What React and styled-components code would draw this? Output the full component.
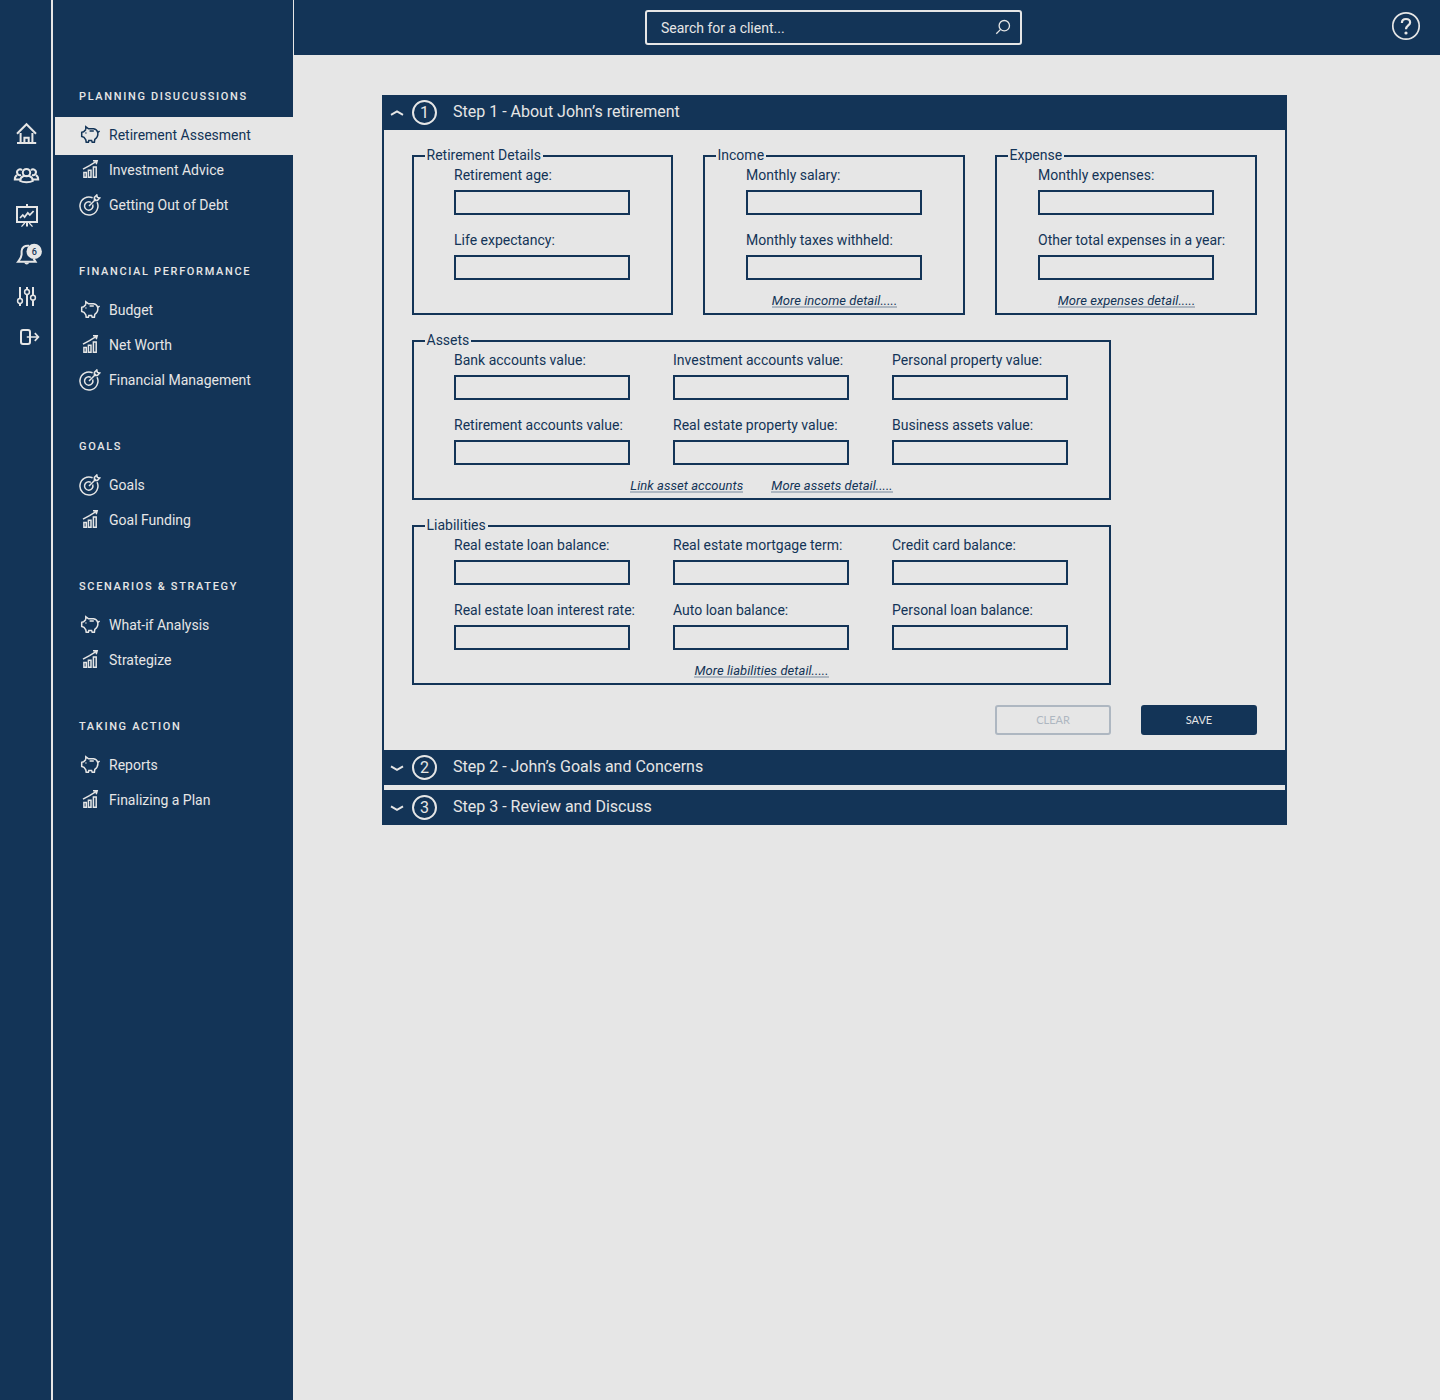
import React from 'react'
import styled, { createGlobalStyle } from 'styled-components'

const navy = '#133457'
const light = '#e6e6e6'

const menu = [
  { title: 'PLANNING DISUCUSSIONS',
    items: [
      { icon: 'pig', label: 'Retirement Assesment', active: true },
      { icon: 'chart', label: 'Investment Advice' },
      { icon: 'target', label: 'Getting Out of Debt' },
    ] },
  { title: 'FINANCIAL PERFORMANCE',
    items: [
      { icon: 'pig', label: 'Budget' },
      { icon: 'chart', label: 'Net Worth' },
      { icon: 'target', label: 'Financial Management' },
    ] },
  { title: 'GOALS',
    items: [
      { icon: 'target', label: 'Goals' },
      { icon: 'chart', label: 'Goal Funding' },
    ] },
  { title: 'SCENARIOS & STRATEGY',
    items: [
      { icon: 'pig', label: 'What-if Analysis' },
      { icon: 'chart', label: 'Strategize' },
    ] },
  { title: 'TAKING ACTION',
    items: [
      { icon: 'pig', label: 'Reports' },
      { icon: 'chart', label: 'Finalizing a Plan' },
    ] },
]

const topGroups = [
  { title: 'Retirement Details', fields: ['Retirement age:', 'Life expectancy:'], links: [] },
  { title: 'Income', fields: ['Monthly salary:', 'Monthly taxes withheld:'], links: ['More income detail.....'] },
  { title: 'Expense', fields: ['Monthly expenses:', 'Other total expenses in a year:'], links: ['More expenses detail.....'] },
]

const wideGroups = [
  { title: 'Assets',
    fields: [
      'Bank accounts value:', 'Investment accounts value:', 'Personal property value:',
      'Retirement accounts value:', 'Real estate property value:', 'Business assets value:',
    ],
    links: ['Link asset accounts', 'More assets detail.....'] },
  { title: 'Liabilities',
    fields: [
      'Real estate loan balance:', 'Real estate mortgage term:', 'Credit card balance:',
      'Real estate loan interest rate:', 'Auto loan balance:', 'Personal loan balance:',
    ],
    links: ['More liabilities detail.....'] },
]

const menuIcons = {
  pig: (
    <>
      <path d="M6.8 5.6 V2.8 L9.6 4.8 H14.6 C17 5.2 18.4 6.8 18.8 8.6 L20.6 7 M18.8 8.6 C19.2 11.6 18 13.8 15.8 15.4 L15.4 18.2 H13.2 L12.6 16.6 H9.8 L9.4 18.2 H7.2 L6.8 15.8 L5 13.4 L2.7 12.4 V8.4 L4.6 7.8 L6.8 5.6" />
      <path d="M10.6 7 H14.8 M6.9 8.6 V9.4" />
    </>
  ),
  chart: (
    <>
      <path d="M4.9 13.6 H7.3 V18.3 H4.9 Z M9.4 11.2 H12 V18.3 H9.4 Z M14.4 8 H17.2 V18.3 H14.4 Z" />
      <path d="M4 10.2 L10.5 6.6 L17.4 2.4 M14 1.8 L18.2 1.8 L17.2 5.2" />
    </>
  ),
  target: (
    <>
      <path d="M13.6 3.8 A9 9 0 1 0 18.1 8.2" />
      <path d="M11.8 8.3 A4.2 4.2 0 1 0 13.7 10.6" />
      <path d="M10 12 L17 5 M15.4 6.4 V3.4 L17.8 1 L18.4 3.4 L20.8 4 L18.4 6.4 H15.4" />
    </>
  ),
}

const HomeIcon = () => (
  <RailSvg viewBox="0 0 51 41">
    <path d="M17 20.8 L26.5 11.2 L36 20.8 M20.6 20 V29.5 M32.4 20 V29.5 M24.4 29.5 V24.8 H28.7 V29.5 M17 30 H36.2" />
  </RailSvg>
)

const PeopleIcon = () => (
  <RailSvg viewBox="0 0 51 41">
    <circle cx="26.5" cy="18.6" r="3.7" />
    <path d="M22 16.2 A2.9 2.9 0 1 0 21 21 M31 16.2 A2.9 2.9 0 1 1 32 21" />
    <path d="M23.6 22 C21 23 20.2 24.6 20.2 27 C23 28.6 30 28.6 32.8 27 C32.8 24.6 32 23 29.4 22 Z" />
    <path d="M17.2 21.2 C15.4 22 14.8 23.2 14.8 25.4 H20.2 M35.8 21.2 C37.6 22 38.2 23.2 38.2 25.4 H32.8" />
  </RailSvg>
)

const BoardIcon = () => (
  <RailSvg viewBox="0 0 51 41">
    <path d="M17 12 H37 V27 H17 Z M27 9 V12 M27 27 V31.5" />
    <path d="M24.8 28 L21.5 31.6 M29.2 28 L32.5 31.6" strokeWidth="1.3" />
    <path d="M20 23 L22.8 20 L24.6 22 L27.8 17.8 L29.8 20 L33.6 16" strokeWidth="1.8" />
  </RailSvg>
)

const BellIcon = () => (
  <RailSvg viewBox="0 0 51 41">
    <path d="M29 9.8 C24.6 9.2 21.8 11.6 21.6 15 V18.6 C21.4 21.8 19.8 23.4 18 25.8 H35.6 L33.6 22.6" />
    <path d="M24.2 26.5 A2.6 2.6 0 0 0 29.2 26.5 Z" fill={light} stroke="none" />
    <circle cx="34.2" cy="15.4" r="7.7" fill={light} stroke="none" />
    <BadgeText x="34.2" y="18.8">6</BadgeText>
  </RailSvg>
)

const SlidersIcon = () => (
  <RailSvg viewBox="0 0 51 41">
    <path d="M20 10 V21.4 M20 26.6 V29 M27 10 V12.4 M27 17.6 V29 M33 10 V18 M33 23.2 V29" />
    <g strokeWidth="1.5">
      <circle cx="20" cy="24" r="2.4" />
      <circle cx="27" cy="15" r="2.4" />
      <circle cx="33" cy="20.7" r="2.4" />
    </g>
  </RailSvg>
)

const ExitIcon = () => (
  <RailSvg viewBox="0 0 51 41">
    <rect x="21" y="12" width="9" height="14" rx="2" />
    <path d="M26.8 19 H38 M34.8 15.2 L38.4 19 L34.8 22.8" strokeWidth="1.7" />
  </RailSvg>
)

const Group = ({ title, fields, links, columns }) => (
  <Fieldset>
    <Legend>{title}</Legend>
    <Fields $columns={columns}>
      {fields.map(label => (
        <Field key={label}>
          <span>{label}</span>
          <Input />
        </Field>
      ))}
    </Fields>
    <Links>
      {links.map(link => <DetailLink key={link} href="#">{link}</DetailLink>)}
    </Links>
  </Fieldset>
)

const Step = ({ number, title, open }) => (
  <StepBar>
    <Chevron viewBox="0 0 14 8">
      <path d={open ? 'M1 5.8 L7 2.4 L13 5.8' : 'M1 2.4 L7 5.8 L13 2.4'} />
    </Chevron>
    <StepNumber>{number}</StepNumber>
    <StepTitle>{title}</StepTitle>
  </StepBar>
)

export default () => (
  <Page>
    <GlobalStyle />
    <Rail>
      <HomeIcon />
      <PeopleIcon />
      <BoardIcon />
      <BellIcon />
      <SlidersIcon />
      <ExitIcon />
    </Rail>
    <Sidebar>
      {menu.map(group => (
        <MenuGroup key={group.title}>
          <MenuTitle>{group.title}</MenuTitle>
          {group.items.map(item => (
            <MenuItem key={item.label} $active={item.active}>
              <MenuSvg viewBox="0 0 22 22">{menuIcons[item.icon]}</MenuSvg>
              {item.label}
            </MenuItem>
          ))}
        </MenuGroup>
      ))}
    </Sidebar>
    <Main>
      <Header>
        <Search>
          <SearchInput placeholder="Search for a client..." />
          <SearchSvg viewBox="0 0 16 16">
            <circle cx="9.3" cy="6.7" r="5.2" />
            <path d="M5.6 10.4 L1.3 14.7" />
          </SearchSvg>
        </Search>
        <HelpSvg viewBox="0 0 30 30">
          <circle cx="15" cy="15" r="13.2" />
          <path d="M10.9 12 C10.9 9.4 12.6 8 15 8 C17.5 8 19.1 9.4 19.1 11.5 C19.1 14.4 15 14.6 15 18.2" strokeWidth="2.2" />
          <circle cx="15" cy="22" r="1.6" fill={light} stroke="none" />
        </HelpSvg>
      </Header>
      <Panel>
        <Step number={1} title="Step 1 - About John’s retirement" open />
        <Body>
          <TopRow>
            {topGroups.map(group => <Group key={group.title} columns={1} {...group} />)}
          </TopRow>
          {wideGroups.map(group => (
            <WideRow key={group.title}><Group columns={3} {...group} /></WideRow>
          ))}
          <Buttons>
            <Button>CLEAR</Button>
            <Button $primary>SAVE</Button>
          </Buttons>
        </Body>
        <Step number={2} title="Step 2 - John’s Goals and Concerns" />
        <Step number={3} title="Step 3 - Review and Discuss" />
      </Panel>
    </Main>
  </Page>
)

const GlobalStyle = createGlobalStyle`
  * {
    box-sizing: border-box;
  }
  body {
    margin: 0;
    background: ${light};
    color: ${navy};
    font-family: Roboto, "Liberation Sans", sans-serif;
    font-size: 14px;
  }
`
const Page = styled.div`
  display: flex;
  min-height: 1400px;
`
const Rail = styled.div`
  display: flex;
  flex-direction: column;
  width: 53px;
  padding-top: 113px;
  background: ${navy};
  border-right: 2px solid ${light};
`
const RailSvg = styled.svg`
  width: 51px;
  height: 41px;
  fill: none;
  stroke: ${light};
  stroke-width: 2;
`
const BadgeText = styled.text`
  fill: ${navy};
  stroke: none;
  font-size: 9px;
  font-weight: 500;
  text-anchor: middle;
`
const Sidebar = styled.nav`
  width: 240px;
  padding: 86px 0 0 2px;
  background: ${navy};
`
const MenuGroup = styled.div`
  margin-bottom: 39px;
`
const MenuTitle = styled.div`
  height: 20px;
  margin: 0 0 11px 24px;
  color: ${light};
  font-size: 11px;
  font-weight: 500;
  line-height: 22px;
  letter-spacing: 1.65px;
  white-space: nowrap;
`
const MenuItem = styled.div`
  display: flex;
  align-items: center;
  height: ${p => (p.$active ? 38 : 35)}px;
  margin-bottom: ${p => (p.$active ? -3 : 0)}px;
  padding: 0 0 ${p => (p.$active ? 3 : 0)}px 24px;
  background: ${p => (p.$active ? light : 'none')};
  color: ${p => (p.$active ? navy : light)};
  white-space: nowrap;
`
const MenuSvg = styled.svg`
  width: 22px;
  height: 22px;
  margin-right: 8px;
  fill: none;
  stroke: currentColor;
  stroke-width: 1.5;
`
const Main = styled.main`
  flex: 1;
  padding-left: 1px;
`
const Header = styled.header`
  display: flex;
  align-items: flex-start;
  justify-content: space-between;
  height: 55px;
  padding: 10px 19px 0 351px;
  background: ${navy};
`
const Search = styled.div`
  display: flex;
  align-items: center;
  width: 377px;
  height: 35px;
  padding: 0 9px 0 14px;
  border: 2px solid ${light};
  border-radius: 3px;
`
const SearchInput = styled.input`
  flex: 1;
  padding: 0;
  border: none;
  outline: none;
  background: none;
  color: ${light};
  font: inherit;
  &::placeholder {
    color: ${light};
    opacity: 1;
  }
`
const SearchSvg = styled.svg`
  width: 16px;
  height: 16px;
  margin-bottom: 2px;
  fill: none;
  stroke: ${light};
  stroke-width: 1.3;
`
const HelpSvg = styled.svg`
  width: 30px;
  height: 30px;
  margin-top: 1px;
  fill: none;
  stroke: ${light};
  stroke-width: 1.7;
`
const Panel = styled.section`
  width: 905px;
  margin: 40px 0 0 88px;
  border: solid ${navy};
  border-width: 0 2px;
`
const StepBar = styled.div`
  display: flex;
  align-items: center;
  height: 35px;
  padding-left: 5.5px;
  background: ${navy};
  color: ${light};
  & + & {
    margin-top: 5px;
  }
`
const Chevron = styled.svg`
  width: 14px;
  height: 8px;
  fill: none;
  stroke: ${light};
  stroke-width: 2;
`
const StepNumber = styled.div`
  width: 25px;
  height: 25px;
  margin: 0 16px 0 8.5px;
  border: 2px solid ${light};
  border-radius: 50%;
  font-size: 16px;
  line-height: 21px;
  text-align: center;
`
const StepTitle = styled.div`
  padding-bottom: 2px;
  font-size: 16px;
`
const Body = styled.div`
  height: 620px;
  padding: 17px 28px 0;
`
const TopRow = styled.div`
  display: grid;
  grid-template-columns: 261px 262px 262px;
  gap: 30px;
  height: 168px;
`
const WideRow = styled.div`
  width: 699px;
  height: 168px;
  margin-top: 17px;
`
const Fieldset = styled.fieldset`
  min-width: 0;
  height: 168px;
  margin: 0;
  padding: 0 0 0 40px;
  border: 2px solid ${navy};
  & + & {
    padding-left: 41px;
  }
`
const Legend = styled.legend`
  height: 18px;
  margin-left: -29px;
  padding: 0 2px 0 1.5px;
  line-height: 16px;
  ${Fieldset} + ${Fieldset} > & {
    margin-left: -30px;
  }
`
const Fields = styled.div`
  display: grid;
  grid-template-columns: repeat(${p => p.$columns}, 176px);
  gap: 15px 43px;
`
const Field = styled.label`
  display: flex;
  flex-direction: column;
  gap: 5px;
  line-height: 20px;
  white-space: nowrap;
`
const Input = styled.input`
  width: 176px;
  height: 25px;
  padding: 0 6px;
  border: 2px solid ${navy};
  background: none;
  color: ${navy};
  font: inherit;
`
const Links = styled.div`
  display: flex;
  justify-content: center;
  gap: 28px;
  margin: 12px 0 0 -40px;
`
const DetailLink = styled.a`
  height: 16px;
  border-bottom: 2px solid #aeb7c1;
  color: ${navy};
  font-size: 13px;
  font-style: italic;
  line-height: 18px;
  letter-spacing: 0.05px;
  text-decoration: none;
`
const Buttons = styled.div`
  display: flex;
  justify-content: flex-end;
  gap: 30px;
  margin-top: 20px;
`
const Button = styled.button`
  width: 116px;
  height: 30px;
  padding: 0 0 2px;
  border: 2px solid ${p => (p.$primary ? navy : '#aeb7c1')};
  border-radius: 3px;
  background: ${p => (p.$primary ? navy : 'none')};
  color: ${p => (p.$primary ? light : '#aeb7c1')};
  font-family: Lato, "Liberation Sans", sans-serif;
  font-size: 11px;
`
